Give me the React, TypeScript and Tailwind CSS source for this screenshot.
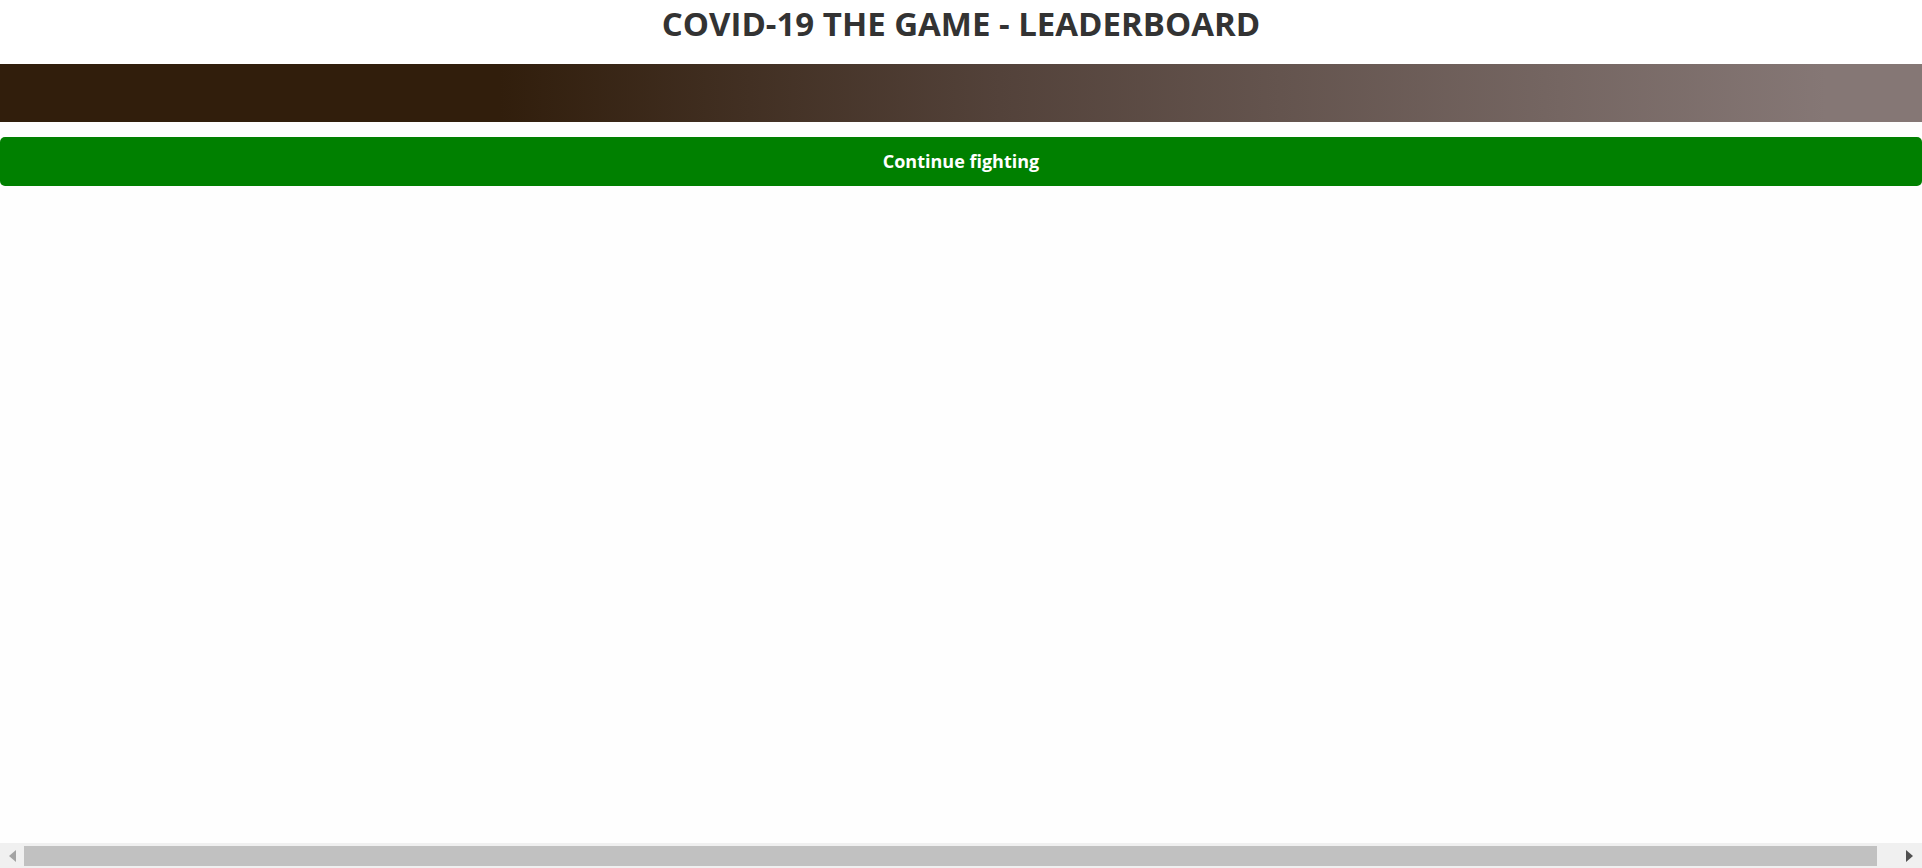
export default function App() {
  return (
    <div
      className="flex h-screen flex-col overflow-hidden bg-[#fefefe]"
      style={{ fontFamily: '"Open Sans", "Noto Sans", sans-serif' }}
    >
      {/* Title */}
      <h1 className="h-[64px] pt-[4px] text-center text-[33px] leading-[40px] font-bold text-[#333333] bg-white">
        COVID-19 THE GAME - LEADERBOARD
      </h1>

      {/* Banner strip */}
      <div className="h-[58px] w-full bg-[linear-gradient(to_right,#311e0c_26%,#53423a_52%,#857775_95%)]" />

      {/* Action */}
      <div className="mt-[15px]">
        <button className="h-[49px] w-full rounded-[5px] bg-[#008000] text-[18px] font-bold text-white">
          Continue fighting
        </button>
      </div>

      <div className="flex-1" />

      {/* Horizontal scrollbar */}
      <div className="flex h-[25px] items-center bg-[#f0f0f0]">
        <div className="flex h-full w-[24px] items-center justify-center">
          <svg width="7" height="12" viewBox="0 0 7 12">
            <path d="M7 0 L0 6 L7 12 Z" fill="#a3a3a3" />
          </svg>
        </div>
        <div className="h-[20px] flex-1 bg-[#c1c1c1]" />
        <div className="flex h-full w-[45px] items-center justify-end pr-[9px]">
          <svg width="7" height="12" viewBox="0 0 7 12">
            <path d="M0 0 L7 6 L0 12 Z" fill="#505050" />
          </svg>
        </div>
      </div>
    </div>
  );
}
